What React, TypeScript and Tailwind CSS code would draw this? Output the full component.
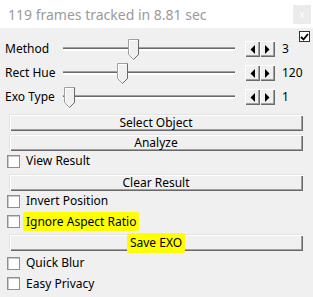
import React from "react";

const font = { fontFamily: '"Noto Sans", "Open Sans", sans-serif' };

const Thumb = () => (
  <svg width="11" height="21" viewBox="0 0 11 21" className="absolute top-[-9px]">
    <path d="M0.5 0.5 H10.5 V15.5 L5.5 20.5 L0.5 15.5 Z" fill="#f0f0f0" stroke="#a0a0a0" />
    <path d="M1.5 15 V1.5 H9.5" fill="none" stroke="#ffffff" />
    <path d="M10.5 0.5 V15.5 L5.5 20.5" fill="none" stroke="#696969" />
  </svg>
);

const Slider = (props: { pos: number }) => (
  <div className="relative w-[172px] h-[4px] border-t border-[#a0a0a0] bg-[#696969] border-b-2 border-b-white">
    <div className="absolute" style={{ left: props.pos }}>
      <Thumb />
    </div>
  </div>
);

const SpinBtn = (props: { dir: "l" | "r" }) => (
  <div className="w-[15px] h-[16px] bg-[#f0f0f0] flex items-center justify-center shadow-[inset_1px_1px_0_#ffffff,inset_-1px_-1px_0_#696969,inset_-2px_-2px_0_#a0a0a0]">
    <svg width="5" height="9" viewBox="0 0 5 9">
      {props.dir === "l" ? <path d="M5 0 L0.5 4.5 L5 9 Z" fill="#000" /> : <path d="M0 0 L4.5 4.5 L0 9 Z" fill="#000" />}
    </svg>
  </div>
);

const SliderRow = (props: { label: string; pos: number; value: string }) => (
  <div className="flex items-center h-[24px] pl-[5px]">
    <div className="w-[58px] text-[12px] text-black">{props.label}</div>
    <Slider pos={props.pos} />
    <div className="flex ml-[10px]">
      <SpinBtn dir="l" />
      <SpinBtn dir="r" />
    </div>
    <div className="ml-[7px] text-[12px] text-black">{props.value}</div>
  </div>
);

const Button = (props: { children: React.ReactNode; className?: string }) => (
  <div
    className={
      "ml-[9px] w-[294px] h-[17px] flex items-center justify-center text-[12px] text-black bg-[#f0f0f0] shadow-[inset_1px_1px_0_#e3e3e3,inset_2px_2px_0_#ffffff,inset_-1px_-1px_0_#696969,inset_-2px_-2px_0_#a0a0a0] " +
      (props.className || "")
    }
  >
    {props.children}
  </div>
);

const Check = (props: { label: React.ReactNode; className?: string }) => (
  <div className={"flex items-center pl-[7px] " + (props.className || "")}>
    <div className="w-[13px] h-[13px] bg-white border border-[#8f8f8f] shadow-[inset_1px_1px_0_#c8c8c8]" />
    <div className="ml-[6px] text-[12px] text-black">{props.label}</div>
  </div>
);

export default function App() {
  return (
    <div className="w-[313px] h-[297px] bg-[#f0f0f0] relative overflow-hidden" style={font}>
      <div className="h-[28px] bg-white flex items-center justify-between pl-[8px] pr-[2px]">
        <span className="text-[14px] text-[#9a9a9a]">119 frames tracked in 8.81 sec</span>
        <div className="w-[18px] h-[19px] bg-[#ebebeb] flex items-center justify-center text-[10px] text-white">x</div>
      </div>
      <div className="absolute top-[31px] left-[299px] w-[11px] h-[11px] bg-white border border-[#333] flex items-center justify-center">
        <svg width="9" height="8" viewBox="0 0 9 8">
          <path d="M1 4 L3.5 6.5 L8 1" fill="none" stroke="#000" strokeWidth="1.8" />
        </svg>
      </div>
      <div className="pt-[9px] flex flex-col">
        <SliderRow label="Method" pos={65} value="3" />
        <SliderRow label="Rect Hue" pos={54} value="120" />
        <SliderRow label="Exo Type" pos={1} value="1" />
        <Button className="mt-[5px]">Select Object</Button>
        <Button className="mt-[3px]">Analyze</Button>
        <Check label="View Result" className="h-[20px]" />
        <Button className="mt-[3px]">Clear Result</Button>
        <Check label="Invert Position" className="h-[20px]" />
        <Check
          label={<span className="bg-[#ffff00] rounded-[2px] px-[3px] ml-[-3px] py-[1px]">Ignore Aspect Ratio</span>}
          className="h-[21px]"
        />
        <Button className="mt-[2px]">
          <span className="bg-[#ffff00] rounded-[2px] px-[3px] py-[1px]">Save EXO</span>
        </Button>
        <Check label="Quick Blur" className="mt-[1px] h-[22px]" />
        <Check label="Easy Privacy" className="h-[19px]" />
      </div>
    </div>
  );
}
